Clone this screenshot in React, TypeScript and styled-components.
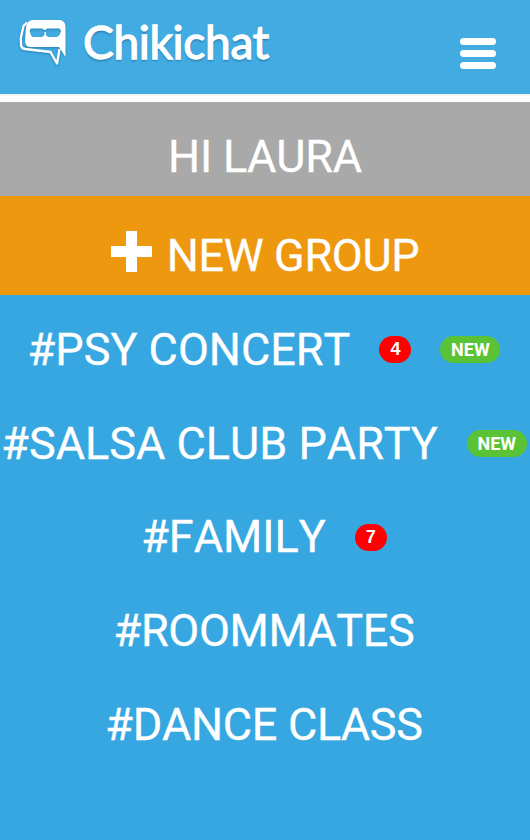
import React from "react";
import styled, { createGlobalStyle } from "styled-components";

const GlobalStyle = createGlobalStyle`
  body { margin: 0; background: #36a7e0; overflow: hidden; }
  * { box-sizing: border-box; }
`;

const Page = styled.main`
  display: flex;
  flex-direction: column;
  width: 530px;
  height: 840px;
  overflow: hidden;
  background: #36a7e0;
  color: #fff;
  font-family: Roboto, "Liberation Sans", sans-serif;
`;

const Header = styled.header`
  display: flex;
  justify-content: space-between;
  height: 94px;
  flex: none;
  padding: 18px 34px 0 18px;
  background: #41abe2;
`;

const Brand = styled.div`
  display: flex;
  align-items: flex-start;
`;

const Mark = styled.svg`
  width: 52px;
  height: 50px;
  filter: drop-shadow(0 1px 1px rgba(0, 50, 90, 0.35));
`;

const Wordmark = styled.h1`
  margin: -2px 0 0 13px;
  font: 400 46px/52px Lato, sans-serif;
  letter-spacing: -0.3px;
  -webkit-text-stroke: 1.3px #fff;
  text-shadow: 0 2px 2px rgba(0, 50, 90, 0.4);
`;

const MenuButton = styled.button`
  display: flex;
  flex-direction: column;
  gap: 5px;
  width: 36px;
  margin-top: 20px;
  padding: 0;
  border: 0;
  background: none;
`;

const MenuBar = styled.span`
  height: 7px;
  border-radius: 4px;
  background: #fff;
`;

const Divider = styled.div`
  height: 8px;
  flex: none;
  background: linear-gradient(#ededed, #fff 35%);
`;

const Band = styled.div<{ $color: string; $height: number; $top: number }>`
  display: flex;
  justify-content: center;
  height: ${(p) => p.$height}px;
  flex: none;
  padding-top: ${(p) => p.$top}px;
  background: ${(p) => p.$color};
`;

const Label = styled.span<{ $spacing?: number }>`
  font-size: 45px;
  line-height: 54px;
  white-space: nowrap;
  font-kerning: none;
  -webkit-text-stroke: 0.3px #fff;
  letter-spacing: ${(p) => p.$spacing ?? 0}px;
`;

const Plus = styled.svg`
  width: 41px;
  height: 41px;
  margin: 2px 15px 0 0;
`;

const Groups = styled.ul`
  margin: 0;
  padding: 8px 2px 0 0;
  list-style: none;
`;

const Group = styled.li`
  display: flex;
  align-items: center;
  justify-content: center;
  height: 93.8px;
`;

const Badge = styled.span<{ $kind: "count" | "new" }>`
  flex: none;
  width: ${(p) => (p.$kind === "new" ? 60 : 32)}px;
  height: 27px;
  margin: 0 0 0 29px;
  border-radius: 14px;
  background: ${(p) => (p.$kind === "new" ? "#5ac335" : "#f00")};
  font: ${(p) => (p.$kind === "new" ? "700 18px/27px Roboto" : '700 18px/27px "Liberation Sans"')}, sans-serif;
  text-align: center;
`;

const groups = [
  { name: "#PSY CONCERT", spacing: 0, count: 4, fresh: true },
  { name: "#SALSA CLUB PARTY", spacing: 0, fresh: true },
  { name: "#FAMILY", spacing: 0, count: 7 },
  { name: "#ROOMMATES", spacing: -0.35 },
  { name: "#DANCE CLASS", spacing: -0.3 },
];

export default function App() {
  return (
    <>
      <GlobalStyle />
      <Page>
        <Header>
          <Brand>
            <Mark viewBox="0 0 52 50" aria-hidden="true">
              <path
                d="M9 4.500 5.500 8 2.800 20 3 27Q3.500 30.500 7 31L32.500 34 39 45.500 41.500 31"
                fill="none"
                stroke="#fff"
                strokeWidth="2.300"
                strokeLinejoin="round"
              />
              <path
                fill="#fff"
                fillRule="evenodd"
                d="M14 2H42Q47.500 3 47.500 9V39L41 29H12Q7 28.500 7 23L8 9Q9 3 14 2ZM13 10.500 11.500 13 13.500 18 15 19H24L26.500 17V14H28V17L30 19H39L41.500 17 43 13 41.500 10.500H29L27.500 12H26L24.500 10.500Z"
              />
            </Mark>
            <Wordmark>Chikichat</Wordmark>
          </Brand>
          <MenuButton aria-label="Menu">
            <MenuBar />
            <MenuBar />
            <MenuBar />
          </MenuButton>
        </Header>
        <Divider />
        <Band $color="#a9a9a9" $height={94} $top={28}>
          <Label $spacing={-0.2}>HI LAURA</Label>
        </Band>
        <Band $color="#ee980f" $height={99} $top={33}>
          <Plus viewBox="0 0 41 41" aria-hidden="true">
            <path fill="#fff" d="M15 0H26V15H41V26H26V41H15V26H0V15H15Z" />
          </Plus>
          <Label $spacing={-0.35}>NEW GROUP</Label>
        </Band>
        <Groups>
          {groups.map((g) => (
            <Group key={g.name}>
              <Label $spacing={g.spacing}>{g.name}</Label>
              {g.count && <Badge $kind="count">{g.count}</Badge>}
              {g.fresh && <Badge $kind="new">NEW</Badge>}
            </Group>
          ))}
        </Groups>
      </Page>
    </>
  );
}
